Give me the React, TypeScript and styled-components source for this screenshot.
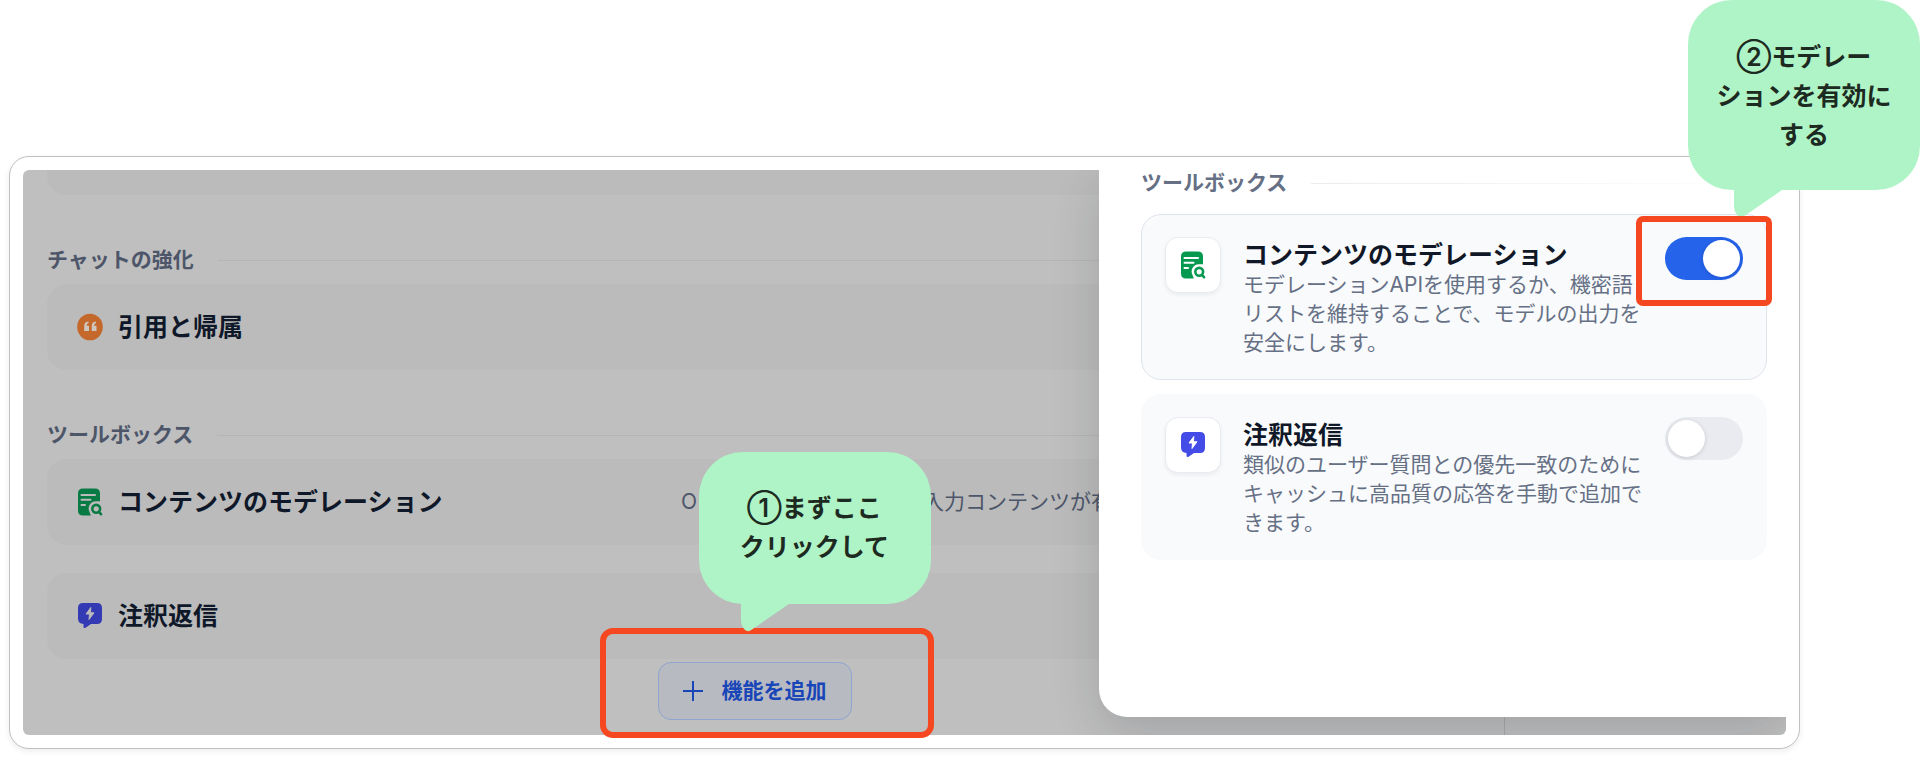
import React from "react";
import styled, { createGlobalStyle } from "styled-components";

const GlobalStyle = createGlobalStyle`
  * { box-sizing: border-box; }
  body {
    margin: 0;
    background: #fff;
    font-family: Inter, "Noto Sans CJK JP", sans-serif;
    color: #101828;
  }
  h2, h3, p { margin: 0; }
`;

const Page = styled.main`
  padding: 156px 120px 11px 9px;
`;

const Frame = styled.div`
  position: relative;
  padding: 13px;
  border: 1px solid #c0c0c0;
  border-radius: 20px;
  background: #fff;
  box-shadow: 0 2px 6px rgba(0, 0, 0, 0.08);
`;

const Stage = styled.div`
  position: relative;
  display: flex;
  overflow: hidden;
  border-radius: 6px;
  background: #bfbfbf;
`;

const MainPane = styled.section`
  flex: 1;
  min-width: 0;
  padding: 0 42px 15px 24px;
`;

const SidePane = styled.div`
  width: 282px;
  border-left: 1px solid #a9a9a9;
`;

const Section = styled.section`
  padding-top: 52px;
`;

const Heading = styled.div<{ $dim?: boolean }>`
  display: flex;
  align-items: center;
  gap: 24px;
  margin-bottom: ${(p) => (p.$dim ? 11 : 18)}px;
  color: ${(p) => (p.$dim ? "#4d5669" : "#667085")};

  &::after {
    content: "";
    flex: 1;
    height: 1px;
    background: ${(p) =>
      p.$dim ? "#b4b4b6" : "linear-gradient(90deg, #eaecf0, rgba(234, 236, 240, 0))"};
  }
`;

const HeadingText = styled.h2`
  font-size: 21px;
  line-height: 26px;
  font-weight: 600;
`;

const FeatureTitle = styled.h3`
  font-size: 25px;
  line-height: 30px;
  font-weight: 600;
`;

const CutCard = styled.div`
  height: 25px;
  border-radius: 0 0 20px 20px;
  background: #bbb;
`;

const FeatureRow = styled.article`
  display: flex;
  align-items: center;
  gap: 15px;
  height: 86px;
  padding: 0 30px;
  border-radius: 20px;
  background: #bbb;

  & + & { margin-top: 28px; }
  ${FeatureTitle} { flex: 0 0 548px; color: #0f1829; }
`;

const Summary = styled.p`
  display: flex;
  font-size: 21px;
  line-height: 28px;
  white-space: nowrap;
  color: #4d5669;
`;

const Provider = styled.span`
  width: 242px;
`;

const Actions = styled.div`
  display: flex;
  justify-content: center;
  padding-top: 3px;
`;

const AddButton = styled.button`
  display: flex;
  align-items: center;
  gap: 19px;
  height: 58px;
  padding: 0 24px;
  border: 1px solid #8fa4cf;
  border-radius: 13px;
  background: #b8bac1;
  color: #1846b8;
  font: 600 21px/28px Inter, "Noto Sans CJK JP", sans-serif;
`;

const Drawer = styled.aside`
  position: absolute;
  top: 0;
  right: 0;
  bottom: 18px;
  width: 687px;
  padding: 0 19px 0 42px;
  border-bottom-left-radius: 28px;
  background: #fff;
  box-shadow: 0 16px 48px rgba(16, 24, 40, 0.16);
`;

const FeatureCard = styled.article<{ $active?: boolean }>`
  display: flex;
  align-items: flex-start;
  height: 166px;
  padding: 22px 23px;
  border: 1px solid ${(p) => (p.$active ? "#dfe3ec" : "#f9fafc")};
  border-radius: 20px;
  background: #f9fafc;

  & + & { margin-top: 14px; }
`;

const IconTile = styled.span`
  display: grid;
  place-items: center;
  flex: none;
  width: 56px;
  height: 56px;
  border: 1px solid #e9ebf1;
  border-radius: 13px;
  background: #fff;
  box-shadow: 0 2px 4px rgba(16, 24, 40, 0.06);
`;

const FeatureText = styled.div`
  flex: 1;
  min-width: 0;
  padding: 3px 17px 0 22px;
`;

const Description = styled.p`
  font-size: 21px;
  line-height: 29px;
  color: #667085;
`;

const Switch = styled.input`
  appearance: none;
  flex: none;
  width: 78px;
  height: 43px;
  margin: 0;
  padding: 3px;
  border-radius: 22px;
  background: #e9ebf0;

  &::before {
    content: "";
    display: block;
    width: 37px;
    height: 37px;
    border-radius: 50%;
    background: #fff;
    box-shadow: 0 1px 4px rgba(16, 24, 40, 0.16);
  }
  &:checked { background: #2563eb; }
  &:checked::before { margin-left: auto; }
`;

const AddHighlight = styled.div`
  position: absolute;
  left: calc(50% - 305px);
  bottom: 10px;
  width: 334px;
  height: 110px;
  border: 6px solid #f64820;
  border-radius: 13px;
`;

const SwitchHighlight = styled.div`
  position: absolute;
  top: 59px;
  right: 27px;
  width: 136px;
  height: 90px;
  border: 6px solid #f64820;
  border-radius: 7px;
`;

const Bubble = styled.div`
  position: absolute;
  display: grid;
  place-items: center;
  width: 232px;
  border-radius: 44px;
  background: #aff4c6;
  color: #1d2a21;
  font-size: 25px;
  line-height: 39px;
  font-weight: 600;
  text-align: center;
`;

const AddBubble = styled(Bubble)`
  left: calc(50% - 206px);
  bottom: 144px;
  height: 152px;
`;

const SwitchBubble = styled(Bubble)`
  top: -157px;
  right: -121px;
  height: 190px;
  padding-top: 2px;
`;

const Tail = styled.svg<{ $left: number }>`
  position: absolute;
  top: calc(100% - 1px);
  left: ${(p) => p.$left}px;
`;

function BubbleTail({ left }: { left: number }) {
  return (
    <Tail $left={left} width="52" height="29" viewBox="0 0 52 29" aria-hidden="true">
      <path d="M0 0H51L48 1L11 26.500Q6.500 30 3 26Q0 22 0 18Z" fill="#aff4c6" />
    </Tail>
  );
}

function QuoteIcon({ color, cut }: { color: string; cut: string }) {
  return (
    <svg width="26" height="28" viewBox="0 0 26 28" aria-hidden="true">
      <ellipse cx="13" cy="14" rx="12.800" ry="13.300" fill={color} />
      <path
        d="M11.500 8.500V10C10.100 10.400 9.700 11.300 9.700 12.800H12V18H7.200V13.200C7.200 10.300 8.500 8.800 11.500 8.500ZM19 8.500V10C17.600 10.400 17.200 11.300 17.200 12.800H19.500V18H14.700V13.200C14.700 10.300 16 8.800 19 8.500Z"
        fill={cut}
      />
    </svg>
  );
}

function ModerationIcon({ color, cut }: { color: string; cut: string }) {
  return (
    <svg width="26" height="28" viewBox="0 0 26 28" aria-hidden="true">
      <path d="M6 0.500H18Q23 0.500 23 5.500V27.500H6Q1 27.500 1 22.500V5.500Q1 0.500 6 0.500Z" fill={color} />
      <path d="M4.500 7H18M4.500 11.800H13.500M4.500 17H8" stroke={cut} strokeWidth="2" strokeLinecap="round" />
      <path d="M19 13.200A7.300 7.300 0 0 0 12.500 24L14 28H26V13.200Z" fill={cut} />
      <circle cx="19.200" cy="20.800" r="3.900" fill="none" stroke={color} strokeWidth="2.600" />
      <path d="M22 24L24 26.200" stroke={color} strokeWidth="2.600" strokeLinecap="round" />
    </svg>
  );
}

function AnnotationIcon({ color, cut }: { color: string; cut: string }) {
  return (
    <svg width="26" height="28" viewBox="0 0 26 28" aria-hidden="true">
      <path
        d="M6 1H20Q25 1 25 6V17Q25 22 20 22H14L8.500 25.700Q6.500 26.800 6.500 24.500V22Q1 21.500 1 16.500V6Q1 1 6 1Z"
        fill={color}
      />
      <path d="M13.800 5.500L9 12H12.500L12 17.500L17 10.800H13.500Z" fill={cut} stroke={cut} strokeLinejoin="round" />
    </svg>
  );
}

function PlusIcon() {
  return (
    <svg width="20" height="20" viewBox="0 0 20 20" aria-hidden="true">
      <path d="M10 0V20M0 10H20" stroke="currentColor" strokeWidth="2" />
    </svg>
  );
}

export default function App() {
  return (
    <>
      <GlobalStyle />
      <Page>
        <Frame>
          <Stage>
            <MainPane>
              <CutCard />
              <Section>
                <Heading $dim>
                  <HeadingText>チャットの強化</HeadingText>
                </Heading>
                <FeatureRow>
                  <QuoteIcon color="#c4682b" cut="#cfc6c0" />
                  <FeatureTitle>引用と帰属</FeatureTitle>
                </FeatureRow>
              </Section>
              <Section>
                <Heading $dim>
                  <HeadingText>ツールボックス</HeadingText>
                </Heading>
                <FeatureRow>
                  <ModerationIcon color="#087b44" cut="#bbbbbb" />
                  <FeatureTitle>コンテンツのモデレーション</FeatureTitle>
                  <Summary>
                    <Provider>O</Provider>
                    <span>入力コンテンツが有</span>
                  </Summary>
                </FeatureRow>
                <FeatureRow>
                  <AnnotationIcon color="#3439b4" cut="#bbbbbb" />
                  <FeatureTitle>注釈返信</FeatureTitle>
                </FeatureRow>
              </Section>
              <Actions>
                <AddButton type="button">
                  <PlusIcon />
                  機能を追加
                </AddButton>
              </Actions>
            </MainPane>
            <SidePane />
            <Drawer>
              <Heading>
                <HeadingText>ツールボックス</HeadingText>
              </Heading>
              <FeatureCard $active>
                <IconTile>
                  <ModerationIcon color="#079950" cut="#ffffff" />
                </IconTile>
                <FeatureText>
                  <FeatureTitle id="moderation">コンテンツのモデレーション</FeatureTitle>
                  <Description>
                    モデレーションAPIを使用するか、機密語リストを維持することで、モデルの出力を安全にします。
                  </Description>
                </FeatureText>
                <Switch type="checkbox" role="switch" aria-labelledby="moderation" defaultChecked />
              </FeatureCard>
              <FeatureCard>
                <IconTile>
                  <AnnotationIcon color="#444ce7" cut="#ffffff" />
                </IconTile>
                <FeatureText>
                  <FeatureTitle id="annotation">注釈返信</FeatureTitle>
                  <Description>
                    類似のユーザー質問との優先一致のためにキャッシュに高品質の応答を手動で追加できます。
                  </Description>
                </FeatureText>
                <Switch type="checkbox" role="switch" aria-labelledby="annotation" />
              </FeatureCard>
            </Drawer>
          </Stage>
          <AddHighlight />
          <AddBubble>
            <p>
              ①まずここ
              <br />
              クリックして
            </p>
            <BubbleTail left={42} />
          </AddBubble>
          <SwitchBubble>
            <p>
              ②モデレー
              <br />
              ションを有効に
              <br />
              する
            </p>
            <BubbleTail left={46} />
          </SwitchBubble>
          <SwitchHighlight />
        </Frame>
      </Page>
    </>
  );
}
